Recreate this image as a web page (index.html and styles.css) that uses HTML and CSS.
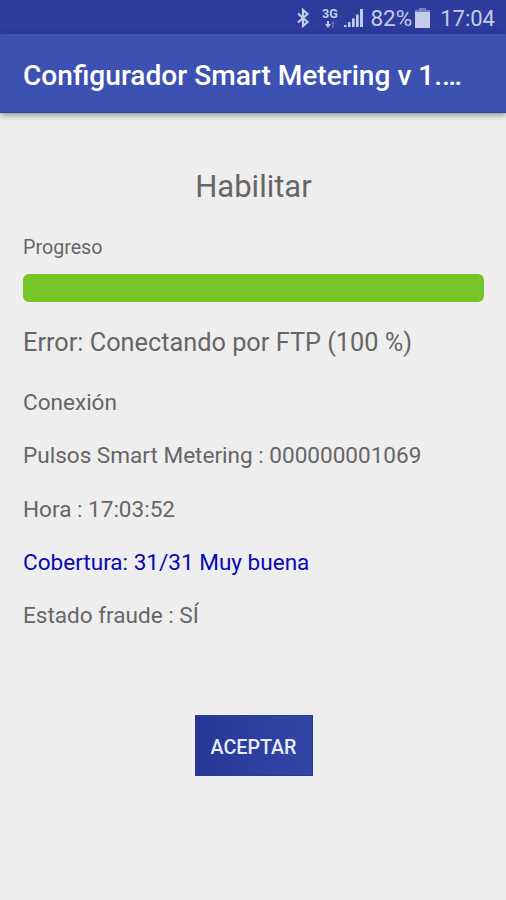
FILE: index.html
```html
<!DOCTYPE html>
<html lang="es">
<head>
  <meta charset="UTF-8">
  <meta name="viewport" content="width=device-width, initial-scale=1.0">
  <title>Configurador Smart Metering</title>
  <link rel="stylesheet" href="styles.css">
</head>
<body>
<div class="status-bar">
  <svg class="icon-bluetooth" width="14" height="20" viewBox="0 0 14 20">
    <path d="M2 5.500L11.500 14L7 18V2L11.500 6L2 14.500"/>
  </svg>
  <div class="network">
    <span>3G</span>
    <svg width="12" height="7" viewBox="0 0 12 7">
      <path class="arrow-down" d="M3 0h2v3h2L4 7L1 3h2z"/>
      <path class="arrow-up" d="M9 0l2 3h-1.300v4H8.300V3H7z"/>
    </svg>
  </div>
  <svg class="icon-signal" width="19" height="18" viewBox="0 0 19 18">
    <path d="M0 16h2.500v2H0zM4 13h2.500v5H4zM8 9.500h2.700V18H8zM12 5.500h2.700V18H12zM16 0h3v18h-3z"/>
  </svg>
  <span class="battery-text">82%</span>
  <svg class="icon-battery" width="15" height="20" viewBox="0 0 15 20">
    <path class="battery-cap" d="M4 0h7v2h4v4H0V2h4z"/>
    <path d="M0 4h15v16H0z"/>
  </svg>
  <span class="clock">17:04</span>
</div>

<header class="toolbar">
  <h1>Configurador Smart Metering v 1.…</h1>
</header>

<main class="content">
  <h2>Habilitar</h2>
  <div class="label">Progreso</div>
  <div class="progress"></div>
  <div class="message">Error: Conectando por FTP (100 %)</div>
  <div class="info">
    <div class="connection">Conexión</div>
    <div class="pulses">Pulsos Smart Metering : 000000001069</div>
    <div class="time">Hora : 17:03:52</div>
    <div class="coverage">Cobertura: 31/31 Muy buena</div>
    <div class="fraud">Estado fraude : SÍ</div>
  </div>
  <button class="accept">ACEPTAR</button>
</main>
</body>
</html>
```
FILE: styles.css
```css
* {
  box-sizing: border-box;
}
body {
  margin: 0;
  height: 900px;
  overflow: hidden;
  font-family: Roboto, sans-serif;
  background-color: #eeeeee;
  color: #666666;
  white-space: nowrap;
}
.status-bar {
  display: flex;
  align-items: center;
  justify-content: flex-end;
  height: 34px;
  padding: 2px 11px 0 0;
  background-color: #2c3b9c;
  color: #c5cbea;
  fill: #c5cbea;
  font-size: 22.5px;
}
.icon-bluetooth {
  margin-right: 11px;
  fill: none;
  stroke: #c5cbea;
  stroke-width: 2.2;
}
.network {
  display: flex;
  flex-direction: column;
  align-items: center;
  width: 17px;
  margin-right: 6px;
  font-size: 12.5px;
  font-weight: 700;
  line-height: 12px;
}
.network svg {
  margin-top: 1px;
}
.arrow-up {
  opacity: 0.4;
}
.icon-signal {
  margin-right: 7px;
}
.icon-battery {
  margin: 0 10px 0 3px;
}
.battery-cap {
  opacity: 0.5;
}
.clock {
  font-size: 22px;
}
.toolbar {
  display: flex;
  align-items: center;
  height: 79px;
  padding: 4px 23px 0;
  background-color: #3c51b2;
  border-bottom: 1px solid #2b409a;
  box-shadow: 0 2px 6px rgba(0, 0, 0, 0.4);
}
h1 {
  margin: 0;
  color: #ffffff;
  font-size: 28.1px;
  font-weight: 500;
}
.content {
  display: flex;
  flex-direction: column;
  padding: 54px 22px 0 23px;
}
h2 {
  margin: 0;
  text-align: center;
  font-size: 31px;
  font-weight: 400;
  line-height: 40px;
}
.label {
  margin-top: 29px;
  font-size: 19.7px;
  line-height: 24px;
}
.progress {
  height: 28px;
  margin-top: 14px;
  background-color: #75c428;
  border-radius: 6px;
}
.message {
  margin-top: 25px;
  font-size: 25.3px;
  line-height: 32px;
}
.info {
  display: flex;
  flex-direction: column;
  gap: 25.3px;
  margin-top: 30px;
  font-size: 22.55px;
  line-height: 28px;
}
.coverage {
  color: #0808b4;
}
.accept {
  align-self: center;
  width: 118px;
  height: 61px;
  margin-top: 85px;
  padding: 3px 0 0;
  border: 1px solid #263b96;
  background: linear-gradient(90deg, #263797, #3345a5);
  color: #e9ebf7;
  font-family: inherit;
  font-size: 19.7px;
  font-weight: 500;
}
```
